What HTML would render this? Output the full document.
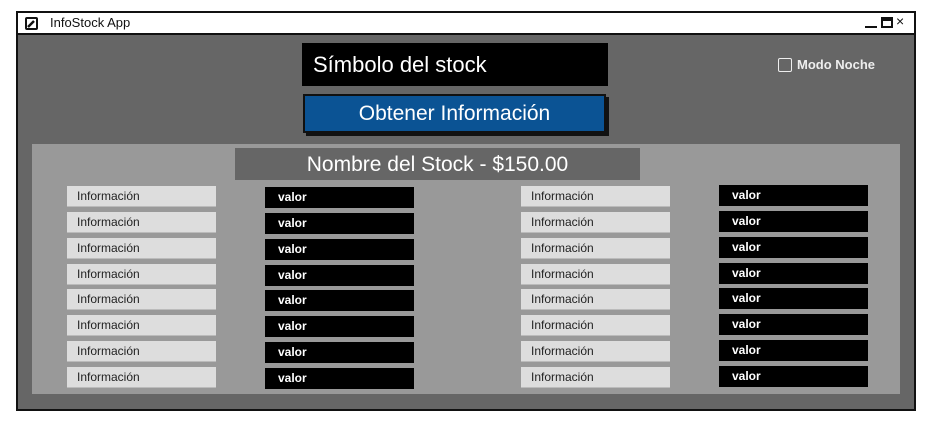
<!DOCTYPE html>
<html><head><meta charset="utf-8"><style>
body{margin:0;width:933px;height:425px;background:#fff;position:relative;overflow:hidden;font-family:"Liberation Sans",sans-serif}
.a{position:absolute;box-sizing:border-box}
.lb{background:#ddd;color:#222;font-size:12px;padding-left:10px;line-height:21px;height:21px;width:149px;border-bottom:1px solid #bbb}
.vl{background:#000;color:#fff;font-size:12px;font-weight:bold;padding-left:13px;line-height:21px;height:21px;width:149px}
</style></head><body>
<div class="a" style="left:16px;top:11px;width:900px;height:400px;border:2px solid #111;background:#666"></div>
<div class="a" style="left:18px;top:13px;width:896px;height:22px;background:#fff;border-bottom:2px solid #111"></div>
<div class="a" style="left:25px;top:17px;width:13px;height:13px;border:2px solid #111;border-radius:2px"></div>
<svg class="a" style="left:27px;top:19px" width="9" height="9"><path d="M1 8 L7 2" stroke="#111" stroke-width="2.5"/></svg>
<div class="a" style="left:50px;top:15px;font-size:13px;color:#111">InfoStock App</div>
<div class="a" style="left:865px;top:26px;width:12px;height:2px;background:#111"></div>
<div class="a" style="left:881px;top:17px;width:12px;height:11px;border:2px solid #111;border-top-width:4px"></div>
<div class="a" style="left:896px;top:13px;font-size:14px;color:#111">×</div>
<div class="a" style="left:302px;top:43px;width:306px;height:43px;background:#000;color:#fff;font-size:22px;padding-left:11px;line-height:43px">Símbolo del stock</div>
<div class="a" style="left:306px;top:97px;width:303px;height:39px;background:#111"></div>
<div class="a" style="left:303px;top:94px;width:303px;height:39px;background:#0b5394;border:2px solid #111;color:#fff;font-size:21px;text-align:center;line-height:35px">Obtener Información</div>
<div class="a" style="left:778px;top:58px;width:14px;height:14px;border:1.5px solid #eee;border-radius:2px"></div>
<div class="a" style="left:797px;top:57px;font-size:13px;font-weight:bold;color:#eee">Modo Noche</div>
<div class="a" style="left:32px;top:144px;width:868px;height:250px;background:#999"></div>
<div class="a" style="left:235px;top:148px;width:405px;height:32px;background:#666;color:#fff;font-size:21px;text-align:center;line-height:34px">Nombre del Stock - $150.00</div>
<div id="rows"></div>
<script>
var ys=[186,212,238,264,289,315,341,367],h='';
ys.forEach(function(y){
h+='<div class="a lb" style="left:67px;top:'+y+'px">Información</div>';
h+='<div class="a vl" style="left:265px;top:'+(y+1)+'px">valor</div>';
h+='<div class="a lb" style="left:521px;top:'+y+'px">Información</div>';
h+='<div class="a vl" style="left:719px;top:'+(y-1)+'px">valor</div>';});
document.getElementById('rows').innerHTML=h;
</script>
</body></html>
